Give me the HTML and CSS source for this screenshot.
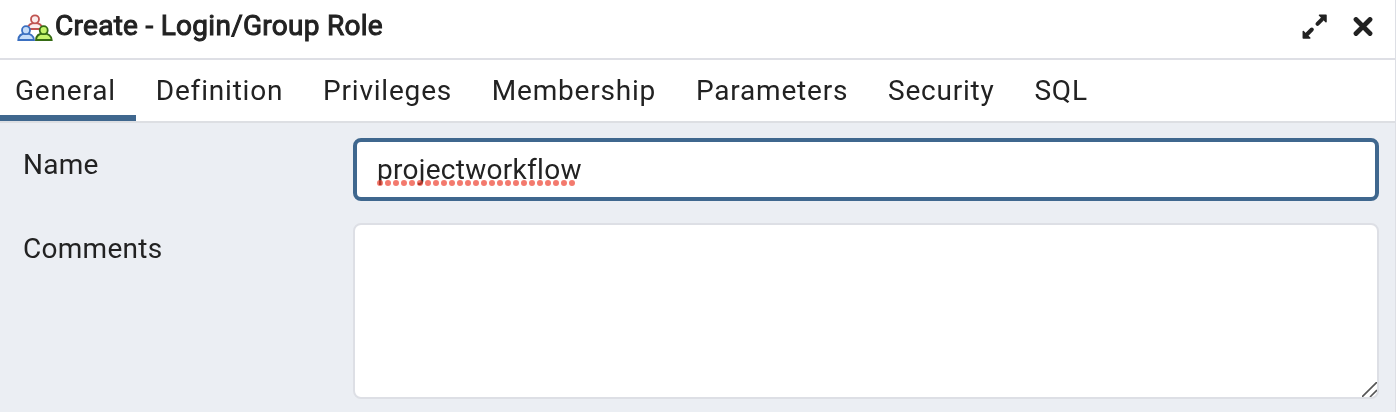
FILE: index.html
```
<!DOCTYPE html>
<html lang="en">
<head>
<meta charset="utf-8">
<title>Create - Login/Group Role</title>
<link rel="stylesheet" href="styles.css">
</head>
<body>
<div class="dialog">
  <header class="header">
    <svg class="role-icon" width="36" height="28" viewBox="0 0 36 28" stroke-width="1.800">
      <g fill="#fbecec" stroke="#c05350"><path d="M10.500 15C11 11.500 13.500 9 18 9S25 11.500 25.500 15Z"/><circle cx="18" cy="5.300" r="4"/></g>
      <g fill="#c5dcf8" stroke="#3a6fc0"><path d="M1.300 26C1.500 22 4.500 19.500 9 19.500S16.800 22 17 26Z"/><circle cx="9" cy="16.200" r="4"/></g>
      <g fill="#c6f56c" stroke="#356b14"><path d="M19 26C19.200 22 22.200 19.500 26.700 19.500S34.500 22 34.700 26Z"/><circle cx="26.700" cy="16.200" r="4"/></g>
    </svg>
    <h1 class="title">Create - Login/Group Role</h1>
    <svg class="expand" width="26" height="26" viewBox="0 0 26 26" fill="#222" stroke="#222" stroke-linejoin="round" stroke-linecap="round">
      <path d="M17.500 1.300H24V7.800ZM1.300 17.500V24H7.800Z" stroke-width="1.500"/>
      <path d="M15.500 9.800L20 5.300M9.800 15.500L5.300 20" stroke-width="4"/>
    </svg>
    <svg class="close" width="20" height="20" viewBox="0 0 20 20" stroke="#222" stroke-width="4.800" stroke-linecap="round"><path d="M3 2.500L17 16.500M17 2.500L3 16.500"/></svg>
  </header>
  <nav class="tabs">
    <span class="tab active">General</span><span class="tab">Definition</span><span class="tab">Privileges</span><span class="tab">Membership</span><span class="tab">Parameters</span><span class="tab">Security</span><span class="tab">SQL</span>
  </nav>
  <main class="form">
    <div class="row name-row"><span class="label">Name</span>
      <div class="input"><span class="value">projectworkflow<svg class="squiggle" width="200" height="6"><line x1="3" y1="3" x2="196" y2="3" stroke="#ee4130" stroke-opacity="0.7" stroke-width="6" stroke-linecap="round" stroke-dasharray="0 8"/></svg></span></div>
    </div>
    <div class="row"><span class="label">Comments</span>
      <div class="textarea"><svg class="grip" width="15" height="15" viewBox="0 0 15 15" stroke="#555" stroke-width="1.600"><path d="M0 15L15 0M8 15L15 8"/></svg></div>
    </div>
  </main>
</div>
</body>
</html>
```
FILE: styles.css
```
* { box-sizing: border-box; }
body { margin: 0; font-family: Roboto, sans-serif; font-size: 28px; color: #222; }
.dialog { height: 412px; border-right: 1px solid #dddfe5; background: #ebeef3; display: flex; flex-direction: column; overflow: hidden; }
.header { height: 60px; flex: none; display: flex; align-items: flex-start; background: #fff; border-bottom: 2px solid #dedfe5; padding: 0 22px 0 17px; }
.role-icon { margin-top: 14px; }
.title { margin: 9px 0 0 2px; flex: 1; font-size: 28px; line-height: 33px; font-weight: 400; letter-spacing: 0.28px; -webkit-text-stroke: 1px #222; white-space: nowrap; }
.expand { margin: 14px 25px 0 0; }
.close { margin-top: 17px; }
.tabs { height: 63px; flex: none; display: flex; background: #fff; border-bottom: 2px solid #dddfe3; }
.tab { padding: 14px 20px 0 19.6px; line-height: 33px; letter-spacing: 0.8px; white-space: nowrap; }
.active { padding-left: 15px; padding-right: 20.4px; border-bottom: 6px solid #3f678e; }
.tab + .tab { padding-right: 20.2px; }
.form { padding: 15px 16px 0 23px; display: flex; flex-direction: column; gap: 22px; }
.row { display: flex; }
.label { width: 330px; flex: none; padding-top: 9px; line-height: 33px; letter-spacing: 0.28px; }
.name-row .label { padding-top: 10px; }
.input { flex: 1; height: 63px; background: #fff; border: 4px solid #3f678e; border-radius: 8px; padding: 11px 20px; line-height: 33px; letter-spacing: 0.28px; }
.value { position: relative; }
.squiggle { position: absolute; left: 0; top: 27px; }
.textarea { flex: 1; height: 176px; background: #fff; border: 2px solid #dddfe5; border-radius: 8px; display: flex; align-items: flex-end; justify-content: flex-end; }
.grip { mix-blend-mode: multiply; }
```
